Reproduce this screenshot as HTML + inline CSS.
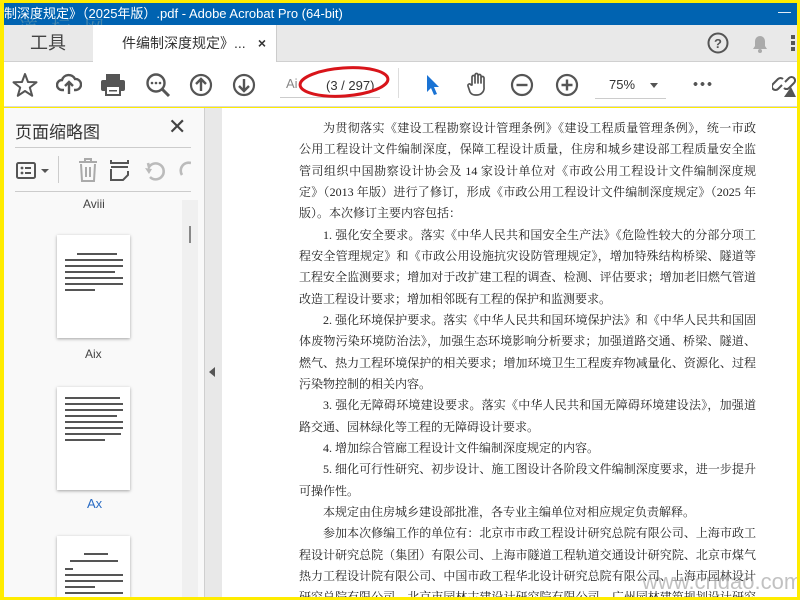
<!DOCTYPE html>
<html style="overflow:hidden;width:800px;height:600px"><head><meta charset="utf-8"><style>
*{margin:0;padding:0;box-sizing:border-box}
body{width:800px;height:600px;overflow:hidden;background:#ffec00;position:relative;font-family:"Liberation Sans","Noto Sans CJK SC",sans-serif}
.abs{position:absolute}
#title{left:4px;top:3px;width:793px;height:22px;background:#0063b1;color:#fff;font-size:13px;line-height:22px;white-space:nowrap;overflow:hidden}
#tabs{left:4px;top:25px;width:793px;height:37px;background:#e9e9e9;border-bottom:1px solid #d0d0d0}
#tb{left:4px;top:62px;width:793px;height:45px;background:#fff;border-bottom:1px solid #d8d8d8;overflow:hidden}
#side{left:4px;top:108px;width:200px;height:489px;background:#f9f9f9;overflow:hidden}
#gut{left:204px;top:108px;width:18px;height:489px;background:#e8e8e8;border-left:1px solid #cfcfcf}
#page{left:222px;top:108px;width:575px;height:489px;background:#fff;overflow:hidden}
.ln{position:absolute;left:77px;width:457px;font-family:"Liberation Serif","Noto Serif CJK SC",serif;font-size:12px;color:#222;white-space:nowrap;text-align:justify;text-align-last:justify;line-height:18px}
.ln.s{text-align-last:left}
.ln.i{left:101px;width:433px}
svg{position:absolute}
.th{position:absolute;left:53px;width:73px;height:103px;background:#fff;box-shadow:0 1px 3px rgba(0,0,0,.35)}
.tl{position:absolute;left:8px;height:2px;background:#555}
</style></head><body>
<div id="title" class="abs">制深度规定》（2025年版）.pdf - Adobe Acrobat Pro (64-bit)<span style="position:absolute;right:6px;top:-2px">—</span></div>
<div class="abs" style="left:18px;top:12px;color:#8aa;font-size:20px;font-family:'Noto Serif CJK SC',serif;opacity:.5;letter-spacing:4px">道 标 网</div>
<div id="tabs" class="abs">
 <div class="abs" style="left:0;top:0;width:88px;height:37px;font-size:18px;color:#444;line-height:37px;text-align:center">工具</div>
 <div class="abs" style="left:89px;top:0;width:184px;height:37px;background:#fff;border-right:1px solid #ccc;font-size:14px;color:#333;line-height:37px;padding-left:29px">件编制深度规定》...<span style="position:absolute;right:10px;font-weight:bold;font-size:14px">×</span></div>
 <svg style="left:703px;top:7px" width="22" height="22"><circle cx="11" cy="11" r="9.5" fill="none" stroke="#555" stroke-width="2"/><text x="11" y="16" font-size="13" font-weight="bold" text-anchor="middle" fill="#555" font-family="Liberation Sans">?</text></svg>
 <svg style="left:746px;top:7px" width="20" height="22"><path d="M3 17 L5 14 V9 a5 5 0 0 1 10 0 V14 L17 17 Z" fill="#aaa"/><circle cx="10" cy="19" r="2" fill="#aaa"/></svg>
 <div class="abs" style="left:787px;top:10px;width:4px;height:16px;background:repeating-linear-gradient(#555 0 4px,transparent 4px 6px)"></div>
</div>
<div id="tb" class="abs">
 <svg style="left:8px;top:10px" width="26" height="26"><path d="M13 2 L16 10 L24.5 10.3 L17.8 15.5 L20.2 23.8 L13 19 L5.8 23.8 L8.2 15.5 L1.5 10.3 L10 10 Z" fill="none" stroke="#555" stroke-width="2" stroke-linejoin="round"/></svg>
 <svg style="left:52px;top:10px" width="26" height="24"><path d="M8 18 H6 a5 5 0 0 1 0-10 a7 7 0 0 1 13-1 a5 5 0 0 1 1 11 H18" fill="none" stroke="#555" stroke-width="2.4"/><path d="M13 22 V11 M9 14 L13 10 L17 14" fill="none" stroke="#555" stroke-width="2.4"/></svg>
 <svg style="left:96px;top:11px" width="26" height="24"><rect x="6" y="1" width="14" height="6" fill="#555"/><rect x="1" y="7" width="24" height="11" rx="2" fill="#555"/><rect x="6" y="13" width="14" height="9" fill="#fff" stroke="#555" stroke-width="2"/><rect x="9" y="17" width="8" height="1.5" fill="#555"/></svg>
 <svg style="left:141px;top:10px" width="26" height="26"><circle cx="11" cy="11" r="8.5" fill="none" stroke="#555" stroke-width="2.4"/><path d="M17 17 L24 24" stroke="#555" stroke-width="3"/><circle cx="7" cy="11" r="1.3" fill="#555"/><circle cx="11" cy="11" r="1.3" fill="#555"/><circle cx="15" cy="11" r="1.3" fill="#555"/></svg>
 <svg style="left:185px;top:11px" width="24" height="24"><circle cx="12" cy="12" r="10" fill="none" stroke="#555" stroke-width="2.2"/><path d="M12 18 V6 M7 11 L12 6 L17 11" fill="none" stroke="#555" stroke-width="2.4"/></svg>
 <svg style="left:228px;top:11px" width="24" height="24"><circle cx="12" cy="12" r="10" fill="none" stroke="#555" stroke-width="2.2"/><path d="M12 6 V18 M7 13 L12 18 L17 13" fill="none" stroke="#555" stroke-width="2.4"/></svg>
 <div class="abs" style="left:276px;top:14px;width:100px;height:22px;border-bottom:1px solid #ccc;font-size:13px;color:#333"><span style="color:#888;margin-left:6px">Ai</span><span style="position:absolute;left:46px;top:2px">(3 / 297)</span></div>
 <svg style="left:292px;top:2px" width="96" height="36"><ellipse cx="48" cy="18" rx="44" ry="14" fill="none" stroke="#d8141a" stroke-width="3" transform="rotate(-4 48 18)"/></svg>
 <div class="abs" style="left:394px;top:6px;width:1px;height:30px;background:#ddd"></div>
 <svg style="left:421px;top:12px" width="16" height="22"><path d="M2 1 L2 18 L6 14 L9 21 L12 20 L9 13 L14 13 Z" fill="#1a73d4"/></svg>
 <svg style="left:462px;top:9px" width="24" height="26"><path d="M6 14 V6 a1.5 1.5 0 0 1 3 0 V12 V4 a1.5 1.5 0 0 1 3 0 V12 V5 a1.5 1.5 0 0 1 3 0 V12 V7 a1.5 1.5 0 0 1 3 0 V16 a7 7 0 0 1-7 8 h-2 a6 6 0 0 1-5-3 L2 15 a1.5 1.5 0 0 1 3-1 Z" fill="none" stroke="#555" stroke-width="1.7" stroke-linejoin="round"/></svg>
 <svg style="left:506px;top:11px" width="24" height="24"><circle cx="12" cy="12" r="10" fill="none" stroke="#555" stroke-width="2.2"/><path d="M6.5 12 H17.5" stroke="#555" stroke-width="2.4"/></svg>
 <svg style="left:551px;top:11px" width="24" height="24"><circle cx="12" cy="12" r="10" fill="none" stroke="#555" stroke-width="2.2"/><path d="M6.5 12 H17.5 M12 6.5 V17.5" stroke="#555" stroke-width="2.4"/></svg>
 <div class="abs" style="left:591px;top:12px;width:71px;height:25px;border-bottom:1px solid #ccc;font-size:13px;color:#333;padding-left:14px;line-height:22px">75%<span style="position:absolute;left:55px;top:9px;border:4px solid transparent;border-top:5px solid #555"></span></div>
 <div class="abs" style="left:688px;top:20px;width:20px;height:4px;background:radial-gradient(circle,#555 1.8px,transparent 2px) 0 0/7px 4px"></div>
 <svg style="left:768px;top:9px" width="24" height="26"><path d="M10 14 L6 18 a3.5 3.5 0 0 1-5-5 L6 8 a3.5 3.5 0 0 1 5 0 M13 11 L17 7 a3.5 3.5 0 0 1 5 5 L17 17 a3.5 3.5 0 0 1-5 0" fill="none" stroke="#555" stroke-width="2"/><path d="M12 26 L19 16 L24 26Z" fill="#555"/></svg>
</div>
<div id="side" class="abs">
 <div class="abs" style="left:11px;top:10px;font-size:17px;color:#333">页面缩略图</div>
 <div class="abs" style="left:164px;top:6px;font-size:22px;color:#444">✕</div>
 <div class="abs" style="left:11px;top:39px;width:176px;height:1px;background:#ccc"></div>
 <svg style="left:12px;top:52px" width="40" height="22"><rect x="1" y="3" width="18" height="15" rx="1.5" fill="none" stroke="#555" stroke-width="2"/><circle cx="6" cy="8" r="1.4" fill="#555"/><circle cx="6" cy="13" r="1.4" fill="#555"/><path d="M9 8 H15 M9 13 H15" stroke="#555" stroke-width="2"/><path d="M25 9 L33 9 L29 13Z" fill="#555"/></svg>
 <div class="abs" style="left:54px;top:48px;width:1px;height:27px;background:#ccc"></div>
 <svg style="left:73px;top:50px" width="22" height="24"><path d="M2 4 H20 M8 4 V1 H14 V4 M4 6 L5 23 H17 L18 6 M9 9 V19 M13 9 V19" fill="none" stroke="#aaa" stroke-width="2"/></svg>
 <svg style="left:106px;top:50px" width="20" height="24"><path d="M1 2 V5 H18 V2 M1 9 H18 M1 11 V22 H13 L18 17 V13" fill="none" stroke="#555" stroke-width="2"/></svg>
 <svg style="left:140px;top:52px" width="22" height="22"><path d="M6 17 a8 8 0 1 0 -1-10 L4 3" fill="none" stroke="#bbb" stroke-width="2.6"/><path d="M1 8 L8 9 L5 14Z" fill="#bbb"/></svg>
 <svg style="left:173px;top:52px" width="14" height="22"><path d="M14 3 a8 8 0 0 0 -9 12" fill="none" stroke="#bbb" stroke-width="2.6"/></svg>
 <div class="abs" style="left:11px;top:83px;width:176px;height:1px;background:#ccc"></div>
 <div class="abs" style="left:79px;top:89px;font-size:12px;color:#444">Aviii</div>
 <div class="abs" style="left:178px;top:92px;width:16px;height:397px;background:#f0f0f0"></div>
 <div class="abs" style="left:185px;top:118px;width:2px;height:17px;background:#888"></div>
 <div class="th" style="top:127px"><div class="tl" style="top:18px;width:40px;left:20px"></div><div class="tl" style="top:24px;width:58px"></div><div class="tl" style="top:30px;width:58px"></div><div class="tl" style="top:36px;width:50px"></div><div class="tl" style="top:42px;width:58px"></div><div class="tl" style="top:48px;width:58px"></div><div class="tl" style="top:54px;width:30px"></div></div>
 <div class="abs" style="left:81px;top:239px;font-size:12px;color:#444">Aix</div>
 <div class="th" style="top:279px"><div class="tl" style="top:10px;width:55px"></div><div class="tl" style="top:16px;width:58px"></div><div class="tl" style="top:22px;width:58px"></div><div class="tl" style="top:28px;width:52px"></div><div class="tl" style="top:34px;width:58px"></div><div class="tl" style="top:40px;width:58px"></div><div class="tl" style="top:46px;width:56px"></div><div class="tl" style="top:52px;width:40px"></div></div>
 <div class="abs" style="left:83px;top:388px;font-size:13px;color:#2a6cc4">Ax</div>
 <div class="th" style="top:428px;height:61px"><div class="tl" style="top:17px;width:24px;left:27px"></div><div class="tl" style="top:24px;width:48px;left:13px"></div><div class="tl" style="top:32px;width:8px"></div><div class="tl" style="top:38px;width:58px"></div><div class="tl" style="top:44px;width:58px"></div><div class="tl" style="top:50px;width:30px"></div><div class="tl" style="top:56px;width:58px"></div></div>
</div>
<div id="gut" class="abs"><div class="abs" style="left:4px;top:259px;border:5px solid transparent;border-right:6px solid #555;border-left:0"></div></div>
<div id="page" class="abs">
<div class="ln i" style="top:11px">为贯彻落实《建设工程勘察设计管理条例》《建设工程质量管理条例》，统一市政</div>
<div class="ln" style="top:32px">公用工程设计文件编制深度，保障工程设计质量，住房和城乡建设部工程质量安全监</div>
<div class="ln" style="top:54px">管司组织中国勘察设计协会及 14 家设计单位对《市政公用工程设计文件编制深度规</div>
<div class="ln" style="top:75px">定》（2013 年版）进行了修订，形成《市政公用工程设计文件编制深度规定》（2025 年</div>
<div class="ln s" style="top:96px">版）。本次修订主要内容包括：</div>
<div class="ln i" style="top:118px">1. 强化安全要求。落实《中华人民共和国安全生产法》《危险性较大的分部分项工</div>
<div class="ln" style="top:139px">程安全管理规定》和《市政公用设施抗灾设防管理规定》，增加特殊结构桥梁、隧道等</div>
<div class="ln" style="top:160px">工程安全监测要求；增加对于改扩建工程的调查、检测、评估要求；增加老旧燃气管道</div>
<div class="ln s" style="top:182px">改造工程设计要求；增加相邻既有工程的保护和监测要求。</div>
<div class="ln i" style="top:203px">2. 强化环境保护要求。落实《中华人民共和国环境保护法》和《中华人民共和国固</div>
<div class="ln" style="top:224px">体废物污染环境防治法》，加强生态环境影响分析要求；加强道路交通、桥梁、隧道、</div>
<div class="ln" style="top:246px">燃气、热力工程环境保护的相关要求；增加环境卫生工程废弃物减量化、资源化、过程</div>
<div class="ln s" style="top:267px">污染物控制的相关内容。</div>
<div class="ln i" style="top:288px">3. 强化无障碍环境建设要求。落实《中华人民共和国无障碍环境建设法》，加强道</div>
<div class="ln s" style="top:310px">路交通、园林绿化等工程的无障碍设计要求。</div>
<div class="ln i s" style="top:331px">4. 增加综合管廊工程设计文件编制深度规定的内容。</div>
<div class="ln i" style="top:352px">5. 细化可行性研究、初步设计、施工图设计各阶段文件编制深度要求，进一步提升</div>
<div class="ln s" style="top:374px">可操作性。</div>
<div class="ln i s" style="top:395px">本规定由住房城乡建设部批准，各专业主编单位对相应规定负责解释。</div>
<div class="ln i" style="top:416px">参加本次修编工作的单位有：北京市市政工程设计研究总院有限公司、上海市政工</div>
<div class="ln" style="top:438px">程设计研究总院（集团）有限公司、上海市隧道工程轨道交通设计研究院、北京市煤气</div>
<div class="ln" style="top:459px">热力工程设计院有限公司、中国市政工程华北设计研究总院有限公司、上海市园林设计</div>
<div class="ln" style="top:472px;height:17px;overflow:hidden;line-height:34px">研究总院有限公司、北京市园林古建设计研究院有限公司、广州园林建筑规划设计研究</div>
<div class="abs" style="left:420px;top:462px;font-size:22px;line-height:24px;color:#999;opacity:.6;font-family:'Liberation Sans',sans-serif">www.cndao.com</div>
</div>
</body></html>
